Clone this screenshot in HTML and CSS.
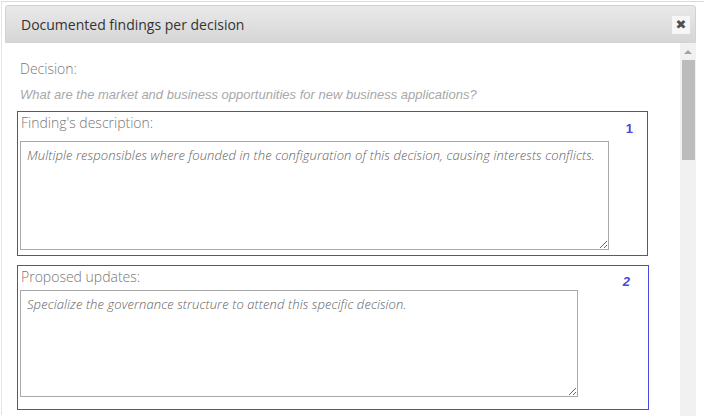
FILE: index.html
```html
<!DOCTYPE html>
<html>
<head>
<meta charset="utf-8">
<link rel="stylesheet" href="styles.css">
</head>
<body>
<div class="frame">
  <div class="dialog">
    <div class="header">
      <span class="title">Documented findings per decision</span>
      <button class="close" aria-label="Close">&#10006;</button>
    </div>
    <div class="body">
      <div class="content">
        <div class="decision-label">Decision:</div>
        <div class="question">What are the market and business opportunities for new business applications?</div>
        <div class="box box-one">
          <div class="col">
            <div class="label">Finding's description:</div>
            <textarea class="ta ta-one">Multiple responsibles where founded in the configuration of this decision, causing interests conflicts.</textarea>
          </div>
          <div class="num">1</div>
        </div>
        <div class="box box-two">
          <div class="col">
            <div class="label">Proposed updates:</div>
            <textarea class="ta ta-two">Specialize the governance structure to attend this specific decision.</textarea>
          </div>
          <div class="num num-two">2</div>
        </div>
      </div>
      <div class="scrollbar">
        <div class="arrow"></div>
        <div class="thumb"></div>
      </div>
    </div>
  </div>
</div>
</body>
</html>
```

FILE: styles.css
```css
html, body {
  margin: 0;
  padding: 0;
  background: #fff;
  overflow: hidden;
  width: 704px;
  height: 416px;
}
.frame {
  margin-top: 1px;
  margin-left: 1px;
  border-top: 1px solid #dcdcdc;
  border-left: 1px solid #e4e4e4;
  height: 414px;
  box-sizing: border-box;
  padding: 3px 0 0 3px;
}
.dialog {
  width: 691px;
  height: 411px;
  display: flex;
  flex-direction: column;
}
.header {
  height: 38px;
  box-sizing: border-box;
  border: 1px solid #d2d2d2;
  border-radius: 3px 3px 0 0;
  background: linear-gradient(#e9e9e9, #d6d6d6);
  display: flex;
  align-items: center;
  justify-content: space-between;
  padding: 0 5px 0 15px;
  flex: none;
}
.title {
  font-family: "Open Sans", sans-serif;
  font-size: 14px;
  color: #333;
}
.close {
  width: 18px;
  height: 18px;
  border: none;
  background: #f6f6f6;
  color: #505050;
  font-size: 13px;
  line-height: 18px;
  padding: 0;
  font-family: "DejaVu Sans", sans-serif;
  margin-top: 1px;
}
.body {
  flex: 1;
  display: flex;
  overflow: hidden;
}
.content {
  flex: 1;
  padding: 14px 0 0 12px;
  overflow: hidden;
}
.decision-label {
  font-family: "Open Sans", sans-serif;
  font-weight: 300;
  font-size: 14px;
  color: #777;
  padding-left: 3px;
  line-height: 24px;
}
.question {
  font-family: "Liberation Sans", Arial, sans-serif;
  font-style: italic;
  font-size: 13px;
  color: #a8a8a8;
  padding-left: 3px;
  margin-top: 6px;
  line-height: 16px;
}
.box {
  border: 1px solid #4a4ade;
  display: flex;
  justify-content: space-between;
  padding: 0 0 0 2px;
  box-sizing: border-box;
}
.box-one {
  margin-top: 8px;
  width: 631px;
  height: 145px;
}
.box-two {
  margin-top: 9px;
  width: 632px;
  height: 145px;
}
.col {
  display: flex;
  flex-direction: column;
}
.label {
  font-family: "Open Sans", sans-serif;
  font-weight: 300;
  font-size: 14px;
  color: #777;
  line-height: 22px;
  padding-left: 1px;
}
.box-one .label {
  margin-bottom: 7px;
}
.box-two .label {
  margin-bottom: 2px;
}
.ta {
  border: 1px solid #a9a9a9;
  box-sizing: border-box;
  font-family: "Open Sans", sans-serif;
  font-style: italic;
  font-weight: 300;
  font-size: 13px;
  letter-spacing: 0.1px;
  color: #5f5f5f;
  padding: 4px 6px;
  margin: 0;
  line-height: 18px;
  outline: none;
}
.ta-one {
  width: 589px;
  height: 109px;
}
.ta-two {
  width: 558px;
  height: 107px;
}
.num {
  font-family: "Liberation Sans", Arial, sans-serif;
  font-weight: bold;
  font-size: 13px;
  color: #4a4ad2;
  margin: 9px 14px 0 0;
}
.num-two {
  font-style: italic;
  margin: 8px 18px 0 0;
}
.scrollbar {
  width: 16px;
  background: #f1f1f1;
  display: flex;
  flex-direction: column;
  align-items: center;
  flex: none;
}
.arrow {
  width: 0;
  height: 0;
  border-left: 4px solid transparent;
  border-right: 4px solid transparent;
  border-bottom: 4px solid #a3a3a3;
  margin-top: 7px;
}
.thumb {
  width: 13px;
  height: 100px;
  background: #bcbcbc;
  margin-top: 6px;
}
```
